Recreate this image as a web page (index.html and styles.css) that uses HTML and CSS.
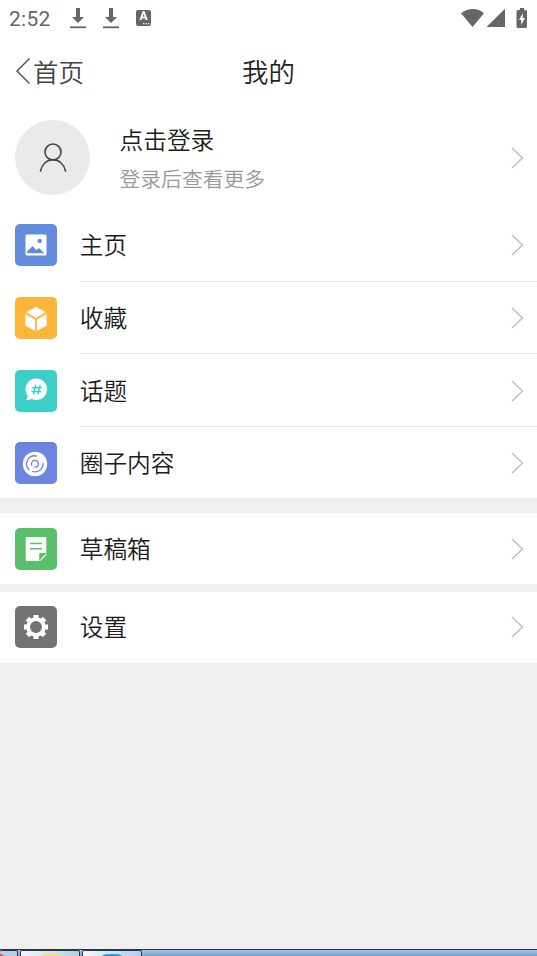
FILE: index.html
```html
<!DOCTYPE html>
<html lang="zh-CN">
<head>
    <meta charset="UTF-8">
    <meta name="viewport" content="width=device-width, initial-scale=1.0">
    <title>我的</title>
    <link rel="stylesheet" href="styles.css">
</head>
<body>
    <div class="status-bar">
        <span class="time">2:52</span>
        <svg class="download" width="16" height="21" viewBox="0 0 16 21"><path d="M6 0h4v9h4l-6 6-6-6h4z"/><path d="M0 18.4h16v1.8H0z"/></svg>
        <svg class="download" width="16" height="21" viewBox="0 0 16 21"><path d="M6 0h4v9h4l-6 6-6-6h4z"/><path d="M0 18.4h16v1.8H0z"/></svg>
        <div class="keyboard">A<svg width="7" height="2" viewBox="0 0 7 2"><path d="M0 0h1.300v1.300H0zM2.500 0h1.300v1.300H2.500zM5 0h1.300v1.300H5z"/></svg></div>
        <div class="signals">
            <svg width="24" height="20" viewBox="0 0 24 20"><path d="M0 5.300C7-.4 17-.4 23 5.300L11.500 19z"/></svg>
            <svg width="19" height="20" viewBox="0 0 19 20"><path d="M18 .7V19H-.5z"/></svg>
            <svg class="battery" width="12" height="21" viewBox="0 0 12 21"><path d="M4 0h4v2h1.500q1.500 0 1.500 1.500v15q0 1.500-1.500 1.500H2Q.5 20 .5 18.500v-15Q.5 2 2 2h2z"/><path class="white" d="M7 5L3 12H5.400L5 17 9 10H6.700z"/></svg>
        </div>
    </div>

    <div class="nav">
        <div class="back">
            <svg width="16" height="28" viewBox="0 0 16 28"><path d="M15.500 1.500L3 14l12.500 12.500"/></svg>
            <span>首页</span>
        </div>
        <div class="title">我的</div>
    </div>

    <div class="profile">
        <div class="avatar">
            <svg width="30" height="32" viewBox="0 0 30 32"><circle cx="15" cy="10" r="8"/><path d="M2.500 29C4 22 9 17.700 15 17.700S26 22 27.500 29"/></svg>
        </div>
        <div class="login">
            <div class="login-title">点击登录</div>
            <div class="login-tip">登录后查看更多</div>
        </div>
        <svg class="arrow" width="14" height="24" viewBox="0 0 14 24"><path d="M2 2L12.500 12 2 22"/></svg>
    </div>

    <div class="menu">
        <div class="item">
            <div class="icon blue">
                <svg width="42" height="42" viewBox="0 0 42 42"><rect x="10.500" y="10.500" width="21" height="21" rx="1.500" fill="#fff"/><circle cx="24.700" cy="17" r="2.200" fill="#648cdc"/><path d="M12 29.300V27.500L17.500 22l4 4 2.500-2 5.500 5.300z" fill="#648cdc"/></svg>
            </div>
            <div class="label">主页</div>
            <svg class="arrow" width="14" height="24" viewBox="0 0 14 24"><path d="M2 2L12.500 12 2 22"/></svg>
        </div>
        <div class="item">
            <div class="icon orange">
                <svg width="42" height="42" viewBox="0 0 42 42" fill="#fff"><path d="M21 9.700l9.800 5.500L21 20.700l-9.800-5.500z"/><path d="M10.300 17l9.800 5.400v11.700l-9.800-5.600z"/><path d="M31.700 17l-9.800 5.400v11.700l9.800-5.600z"/></svg>
            </div>
            <div class="label">收藏</div>
            <svg class="arrow" width="14" height="24" viewBox="0 0 14 24"><path d="M2 2L12.500 12 2 22"/></svg>
        </div>
        <div class="item">
            <div class="icon teal">
                <svg width="42" height="42" viewBox="0 0 42 42"><path d="M21.300 8.500a10.800 10.800 0 1 1-4.600 20.600c-2 .9-3.700 1.100-5.700.9 1.200-1.300 1.600-2.700 1.500-4.500A10.800 10.800 0 0 1 21.300 8.500z" fill="#fff"/><path d="M20.700 14.800l-2.200 9.500M25.200 14.800l-2.200 9.500M17.300 17.700h9.500M16.500 21.500h9.500" fill="none" stroke="#3ccfca" stroke-width="1.500"/></svg>
            </div>
            <div class="label">话题</div>
            <svg class="arrow" width="14" height="24" viewBox="0 0 14 24"><path d="M2 2L12.500 12 2 22"/></svg>
        </div>
        <div class="item">
            <div class="icon indigo">
                <svg width="42" height="42" viewBox="0 0 42 42"><circle cx="20" cy="22" r="12.200" fill="#fff"/><path d="M21.300 14A8 8 0 0 0 14 27.500M28 21.500A8 8 0 0 1 17.500 29.500M16.600 22.800A3.500 3.500 0 1 1 20 25.400" fill="none" stroke="#6b85e3" stroke-width="1.300" stroke-linecap="round"/></svg>
            </div>
            <div class="label">圈子内容</div>
            <svg class="arrow" width="14" height="24" viewBox="0 0 14 24"><path d="M2 2L12.500 12 2 22"/></svg>
        </div>
    </div>

    <div class="menu drafts">
        <div class="item">
            <div class="icon green">
                <svg width="42" height="42" viewBox="0 0 42 42"><path d="M12 9h18q1.300 0 1.300 1.300V25h-5.500q-1.600 0-1.600 1.600V33H12q-1.300 0-1.300-1.300V10.300Q10.700 9 12 9zM26 32.500l5.300-5.700V25L24.200 33z" fill="#fff"/><path d="M15 15.500h12M15 20.700h12" stroke="#5abf6b" stroke-width="1.500"/></svg>
            </div>
            <div class="label">草稿箱</div>
            <svg class="arrow" width="14" height="24" viewBox="0 0 14 24"><path d="M2 2L12.500 12 2 22"/></svg>
        </div>
    </div>

    <div class="menu settings">
        <div class="item">
            <div class="icon gray">
                <svg width="42" height="42" viewBox="0 0 42 42"><circle cx="21" cy="21" r="7.900" fill="none" stroke="#fff" stroke-width="3.800"/><path d="M21 9v4M21 29v4M9 21h4M29 21h4M12.500 12.500l3 3M26.500 26.500l3 3M12.500 29.500l3-3M26.500 15.500l3-3" stroke="#fff" stroke-width="5"/></svg>
            </div>
            <div class="label">设置</div>
            <svg class="arrow" width="14" height="24" viewBox="0 0 14 24"><path d="M2 2L12.500 12 2 22"/></svg>
        </div>
    </div>

    <div class="taskbar">
        <div class="task first"><span class="dot red"></span></div>
        <div class="task"><span class="dot yellow"></span></div>
        <div class="task"><span class="dot cyan"></span></div>
    </div>
</body>
</html>
```
FILE: styles.css
```css
* {
    box-sizing: border-box;
}

body {
    margin: 0;
    height: 956px;
    display: flex;
    flex-direction: column;
    overflow: hidden;
    background-color: #f0f0f0;
    font-family: "Noto Sans CJK SC", sans-serif;
    font-weight: 350;
    color: #1c1c1c;
}

svg {
    display: block;
    flex-shrink: 0;
}

.status-bar {
    height: 36px;
    padding: 0 9px;
    display: flex;
    align-items: center;
    background-color: #fff;
    fill: #666;
    color: #666;
}

.time {
    width: 61px;
    padding-top: 1px;
    font-family: Roboto, sans-serif;
    font-size: 21px;
    font-weight: 400;
    letter-spacing: 0.3px;
}

.download {
    margin-right: 17px;
}

.keyboard {
    width: 15px;
    height: 16px;
    border-radius: 2px;
    background-color: #666;
    color: #fff;
    font: bold 12px/13px Roboto, sans-serif;
    text-align: center;
}

.keyboard svg {
    margin-left: 7px;
    fill: #fff;
}

.signals {
    display: flex;
    margin-left: auto;
    gap: 2px;
}

.battery {
    margin-left: 8px;
}

.white {
    fill: #fff;
}

.nav {
    height: 70px;
    padding: 0 14px;
    display: grid;
    grid-template-columns: 1fr auto 1fr;
    align-items: center;
    background-color: #fff;
}

.back {
    display: flex;
    align-items: center;
    gap: 3px;
    font-size: 25.5px;
    line-height: 36px;
    padding-bottom: 1px;
    color: #444;
}

.back path {
    fill: none;
    stroke: #555;
    stroke-width: 1.5;
}

.title {
    padding-bottom: 2px;
    font-size: 26.4px;
    color: #222;
}

.profile {
    height: 103px;
    padding: 0 13px 0 15px;
    display: flex;
    align-items: center;
    background-color: #fff;
}

.avatar {
    width: 75px;
    height: 75px;
    border-radius: 50%;
    background-color: #eaeaea;
    display: flex;
    align-items: center;
    justify-content: center;
}

.avatar svg {
    fill: none;
    stroke: #444;
    stroke-width: 1.6;
    stroke-linecap: round;
}

.login {
    flex: 1;
    margin-left: 29.5px;
}

.login-title {
    font-size: 23.7px;
    line-height: 40px;
}

.login-tip {
    font-size: 20.8px;
    line-height: 38px;
    color: #999;
}

.arrow {
    fill: none;
    stroke: #bbb;
    stroke-width: 1.3;
}

.menu {
    background-color: #fff;
}

.item {
    height: 72.7px;
    padding: 0 13px 0 15px;
    display: flex;
    align-items: center;
    background: linear-gradient(#e6e6e6, #e6e6e6) 80px 100% / 100% 1px no-repeat;
}

.item:last-child {
    height: 71px;
    background: none;
}

.drafts {
    margin-top: 15px;
}

.settings {
    margin-top: 7.6px;
}

.icon {
    width: 42px;
    height: 42px;
    border-radius: 5px;
}

.blue {
    background-color: #648cdc;
}

.orange {
    background-color: #ffb53a;
}

.teal {
    background-color: #3ccfca;
}

.indigo {
    background-color: #6b85e3;
}

.green {
    background-color: #5abf6b;
}

.gray {
    background-color: #737373;
}

.label {
    flex: 1;
    margin-left: 22.7px;
    padding-bottom: 2px;
    font-size: 23.7px;
}

/* top edge of the desktop taskbar */
.taskbar {
    height: 7px;
    margin-top: auto;
    display: flex;
    gap: 2px;
    border-top: 1px solid #30343a;
    background: linear-gradient(#a9c9e8, #6f9fd0);
    overflow: hidden;
}

.task {
    width: 60px;
    border: 1px solid #26384d;
    border-bottom: 0;
    border-radius: 2px 2px 0 0;
    background: linear-gradient(90deg, #f3f7fb, #b4cee8);
    display: flex;
    justify-content: center;
}

.first {
    width: 18px;
    border-left: 0;
    background: #b4cee8;
    justify-content: flex-start;
}

.dot {
    width: 26px;
    height: 10px;
    margin-top: 3px;
    border-radius: 8px 8px 0 0;
}

.red {
    width: 4px;
    border-radius: 0 4px 0 0;
    background-color: #f2433f;
}

.yellow {
    background-color: #ffdb66;
}

.cyan {
    background-color: #1ba4e2;
}
```
